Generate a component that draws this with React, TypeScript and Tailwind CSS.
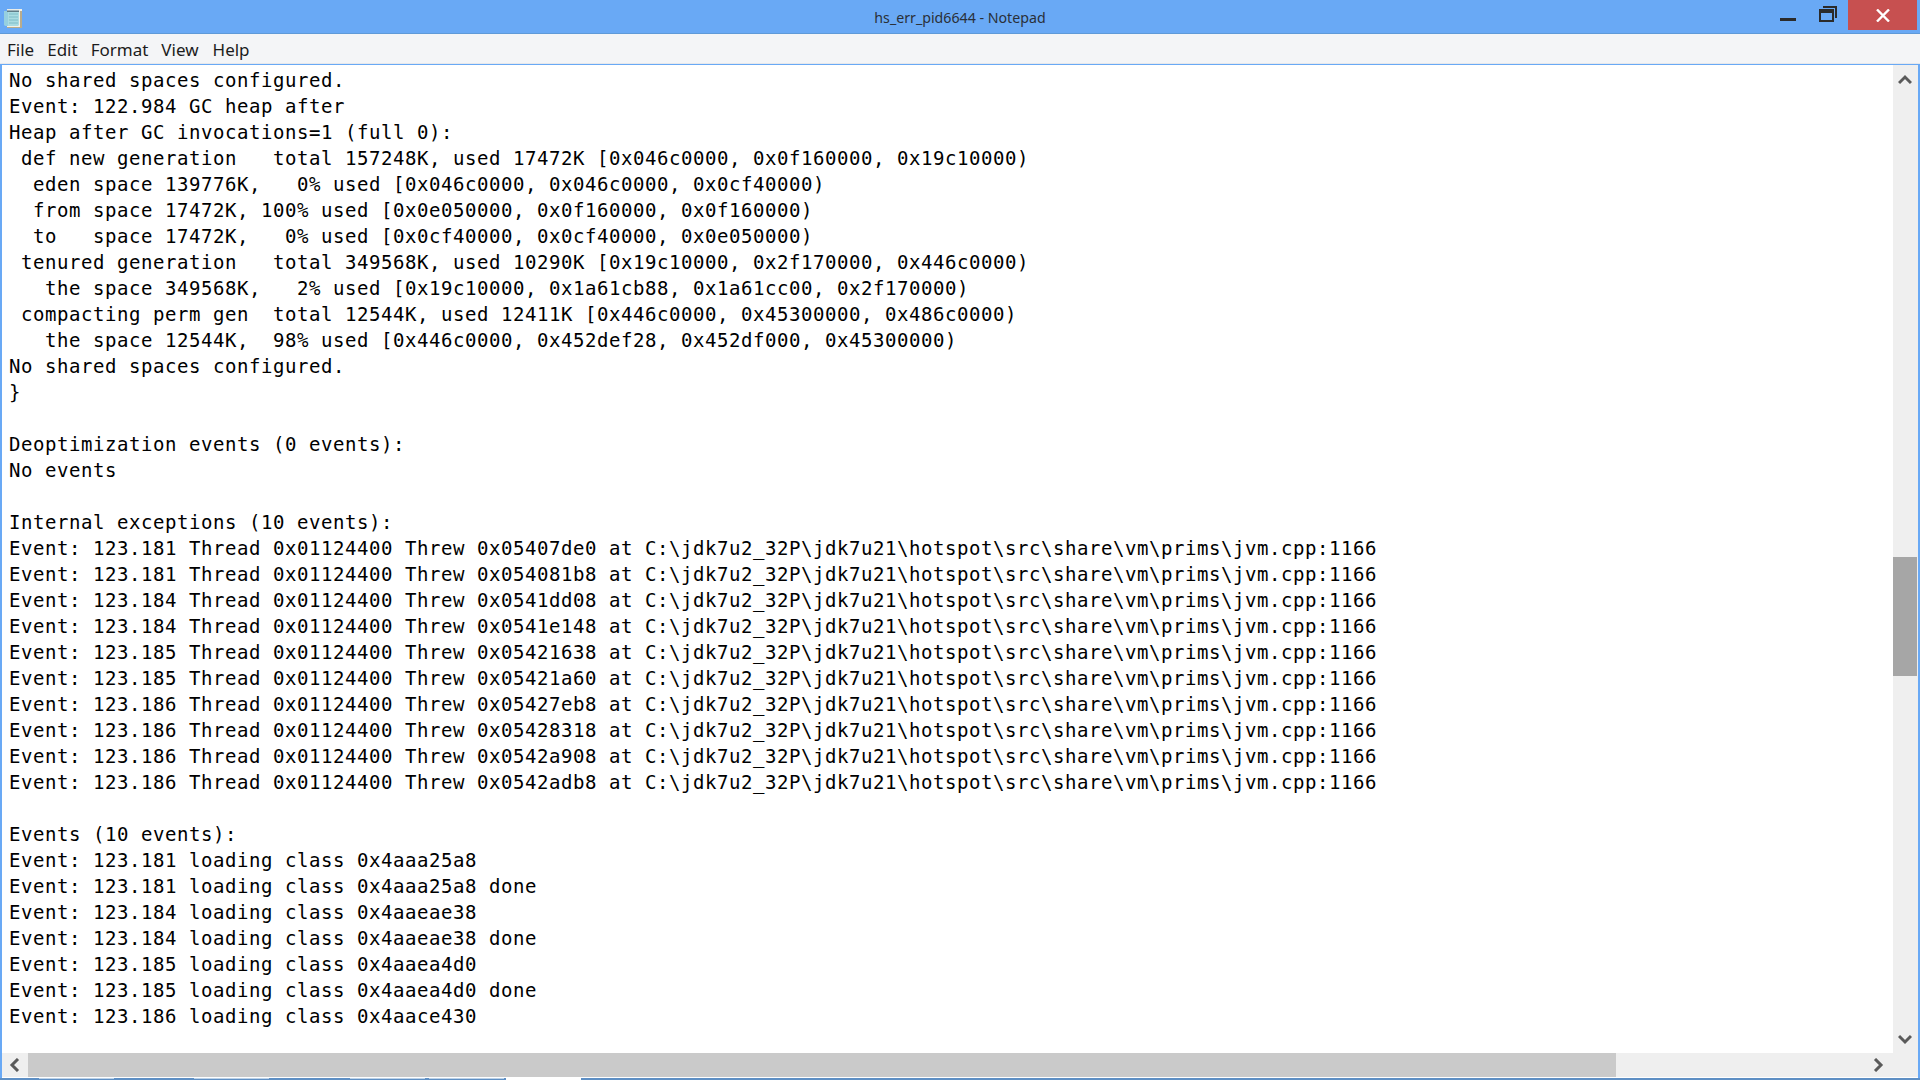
const jvm = "at C:\\jdk7u2_32P\\jdk7u21\\hotspot\\src\\share\\vm\\prims\\jvm.cpp:1166";

const lines = [
  "No shared spaces configured.",
  "Event: 122.984 GC heap after",
  "Heap after GC invocations=1 (full 0):",
  " def new generation   total 157248K, used 17472K [0x046c0000, 0x0f160000, 0x19c10000)",
  "  eden space 139776K,   0% used [0x046c0000, 0x046c0000, 0x0cf40000)",
  "  from space 17472K, 100% used [0x0e050000, 0x0f160000, 0x0f160000)",
  "  to   space 17472K,   0% used [0x0cf40000, 0x0cf40000, 0x0e050000)",
  " tenured generation   total 349568K, used 10290K [0x19c10000, 0x2f170000, 0x446c0000)",
  "   the space 349568K,   2% used [0x19c10000, 0x1a61cb88, 0x1a61cc00, 0x2f170000)",
  " compacting perm gen  total 12544K, used 12411K [0x446c0000, 0x45300000, 0x486c0000)",
  "   the space 12544K,  98% used [0x446c0000, 0x452def28, 0x452df000, 0x45300000)",
  "No shared spaces configured.",
  "}",
  "",
  "Deoptimization events (0 events):",
  "No events",
  "",
  "Internal exceptions (10 events):",
  `Event: 123.181 Thread 0x01124400 Threw 0x05407de0 ${jvm}`,
  `Event: 123.181 Thread 0x01124400 Threw 0x054081b8 ${jvm}`,
  `Event: 123.184 Thread 0x01124400 Threw 0x0541dd08 ${jvm}`,
  `Event: 123.184 Thread 0x01124400 Threw 0x0541e148 ${jvm}`,
  `Event: 123.185 Thread 0x01124400 Threw 0x05421638 ${jvm}`,
  `Event: 123.185 Thread 0x01124400 Threw 0x05421a60 ${jvm}`,
  `Event: 123.186 Thread 0x01124400 Threw 0x05427eb8 ${jvm}`,
  `Event: 123.186 Thread 0x01124400 Threw 0x05428318 ${jvm}`,
  `Event: 123.186 Thread 0x01124400 Threw 0x0542a908 ${jvm}`,
  `Event: 123.186 Thread 0x01124400 Threw 0x0542adb8 ${jvm}`,
  "",
  "Events (10 events):",
  "Event: 123.181 loading class 0x4aaa25a8",
  "Event: 123.181 loading class 0x4aaa25a8 done",
  "Event: 123.184 loading class 0x4aaeae38",
  "Event: 123.184 loading class 0x4aaeae38 done",
  "Event: 123.185 loading class 0x4aaea4d0",
  "Event: 123.185 loading class 0x4aaea4d0 done",
  "Event: 123.186 loading class 0x4aace430",
];

const menus = [
  { label: "File", className: "" },
  { label: "Edit", className: "ml-[13px]" },
  { label: "Format", className: "ml-[13px]" },
  { label: "View", className: "ml-[13px]" },
  { label: "Help", className: "ml-[14px]" },
];

const taskTabs = [
  { className: "ml-[39px] w-[75px] border-[#bcd2e8] bg-[#5e8fc4]" },
  { className: "ml-[80px] w-[75px] border-[#bcd2e8] bg-[#5e8fc4]" },
  { className: "ml-[81px] w-[75px] border-[#bcd2e8] bg-[#5e8fc4]" },
  { className: "ml-[4px] w-[75px] border-[#bcd2e8] bg-[#5e8fc4]" },
  { className: "ml-[2px] w-[75px] border-white bg-white" },
];

function NotepadIcon() {
  return (
    <svg width="20" height="21" viewBox="0 0 20 21" className="ml-[3px] mt-[1px]">
      <path d="M4 1h15v19H4z" fill="#f4f1e6" />
      <path d="M17 3h2v17H4v-1h13z" fill="#b9ac8c" />
      <path d="M1 3h15v14l-1 1H3l-2-1z" fill="#a9dce2" />
      <path d="M1 3h4v15H3l-2-1z" fill="#8fcbe0" opacity="0.7" />
      <path d="M6 6h9M6 9h9M6 12h9M6 15h9" stroke="#7fbcc6" strokeWidth="1" />
      <path d="M4 2h12v2H4z" fill="#5f7c86" />
      <path d="M5 1v2M7 1v2M9 1v2M11 1v2M13 1v2M15 1v2" stroke="#dfe8ea" strokeWidth="1" />
    </svg>
  );
}

function WindowControls() {
  return (
    <div className="flex h-[33px] items-start justify-end">
      <div className="mt-[18px] h-[3px] w-[16px] bg-[#2b2b2b]" />
      <svg width="18" height="16" viewBox="0 0 18 16" className="ml-[23px] mt-[6px]">
        <path d="M4 1h13v11" fill="none" stroke="#2b2b2b" strokeWidth="2" />
        <path d="M1 4h13v11H1z" fill="none" stroke="#2b2b2b" strokeWidth="2" />
        <path d="M1 6h13" stroke="#2b2b2b" strokeWidth="2" />
      </svg>
      <div className="ml-[11px] mr-[3px] flex h-[30px] w-[69px] items-center justify-center bg-[#c75050]">
        <svg width="14" height="13" viewBox="0 0 14 13">
          <path d="M1 0.5l12 12M13 0.5l-12 12" stroke="#fff" strokeWidth="2.4" />
        </svg>
      </div>
    </div>
  );
}

function Chevron({ d }: { d: string }) {
  return (
    <svg width="14" height="14" viewBox="0 0 14 14">
      <path d={d} fill="none" stroke="#5a5a5a" strokeWidth="3" />
    </svg>
  );
}

export default function App() {
  return (
    <div className="flex h-[1080px] w-[1920px] flex-col overflow-hidden bg-white">
      <div className="grid h-[34px] shrink-0 grid-cols-[1fr_auto_1fr] border-b border-[#5f9ad8] bg-[#69a9f5]">
        <div className="flex items-start pt-[7px]">
          <NotepadIcon />
        </div>
        <div className="pt-[8px] text-[14.2px] leading-[20px] text-[#2a3038] [font-family:'Noto_Sans',sans-serif]">
          hs_err_pid6644 - Notepad
        </div>
        <WindowControls />
      </div>

      <div className="flex h-[30px] shrink-0 items-center border-b border-[#e6e8ec] bg-[#f4f5f7] pl-[7px] pt-[2px] text-[17px] text-[#1c1c1c] [font-family:'Noto_Sans',sans-serif]">
        {menus.map((m) => (
          <span key={m.label} className={m.className}>
            {m.label}
          </span>
        ))}
      </div>

      <div className="flex min-h-0 flex-1 flex-col border-x-2 border-t border-[#69a9f5]">
        <div className="flex min-h-0 flex-1">
          <pre className="min-w-0 flex-1 overflow-hidden pl-[7px] pt-[2px] text-[19px] leading-[26px] tracking-[0.56px] text-black [font-family:'DejaVu_Sans_Mono',monospace]">
            {lines.map((line, i) => (
              <div key={i} className="h-[26px]">
                {line}
              </div>
            ))}
          </pre>
          <div className="flex w-[25px] shrink-0 flex-col bg-[#efefef] pr-px">
            <div className="flex h-[30px] items-center justify-center">
              <Chevron d="M1 10l6-6 6 6" />
            </div>
            <div className="mt-[462px] h-[119px] bg-[#a6a6a6]" />
            <div className="mt-auto flex h-[28px] items-center justify-center">
              <Chevron d="M1 4l6 6 6-6" />
            </div>
          </div>
        </div>
        <div className="flex h-[24px] shrink-0 bg-[#efefef]">
          <div className="flex w-[26px] items-center justify-center">
            <Chevron d="M10 1L4 7l6 6" />
          </div>
          <div className="w-[1588px] bg-[#cacaca]" />
          <div className="ml-auto mr-[33px] flex items-center">
            <Chevron d="M4 1l6 6-6 6" />
          </div>
        </div>
        <div className="h-px shrink-0 bg-white" />
      </div>

      <div className="flex h-[2px] shrink-0 bg-[#5e8fc4]">
        {taskTabs.map((t, i) => (
          <div key={i} className={`border-t ${t.className}`} />
        ))}
      </div>
    </div>
  );
}
